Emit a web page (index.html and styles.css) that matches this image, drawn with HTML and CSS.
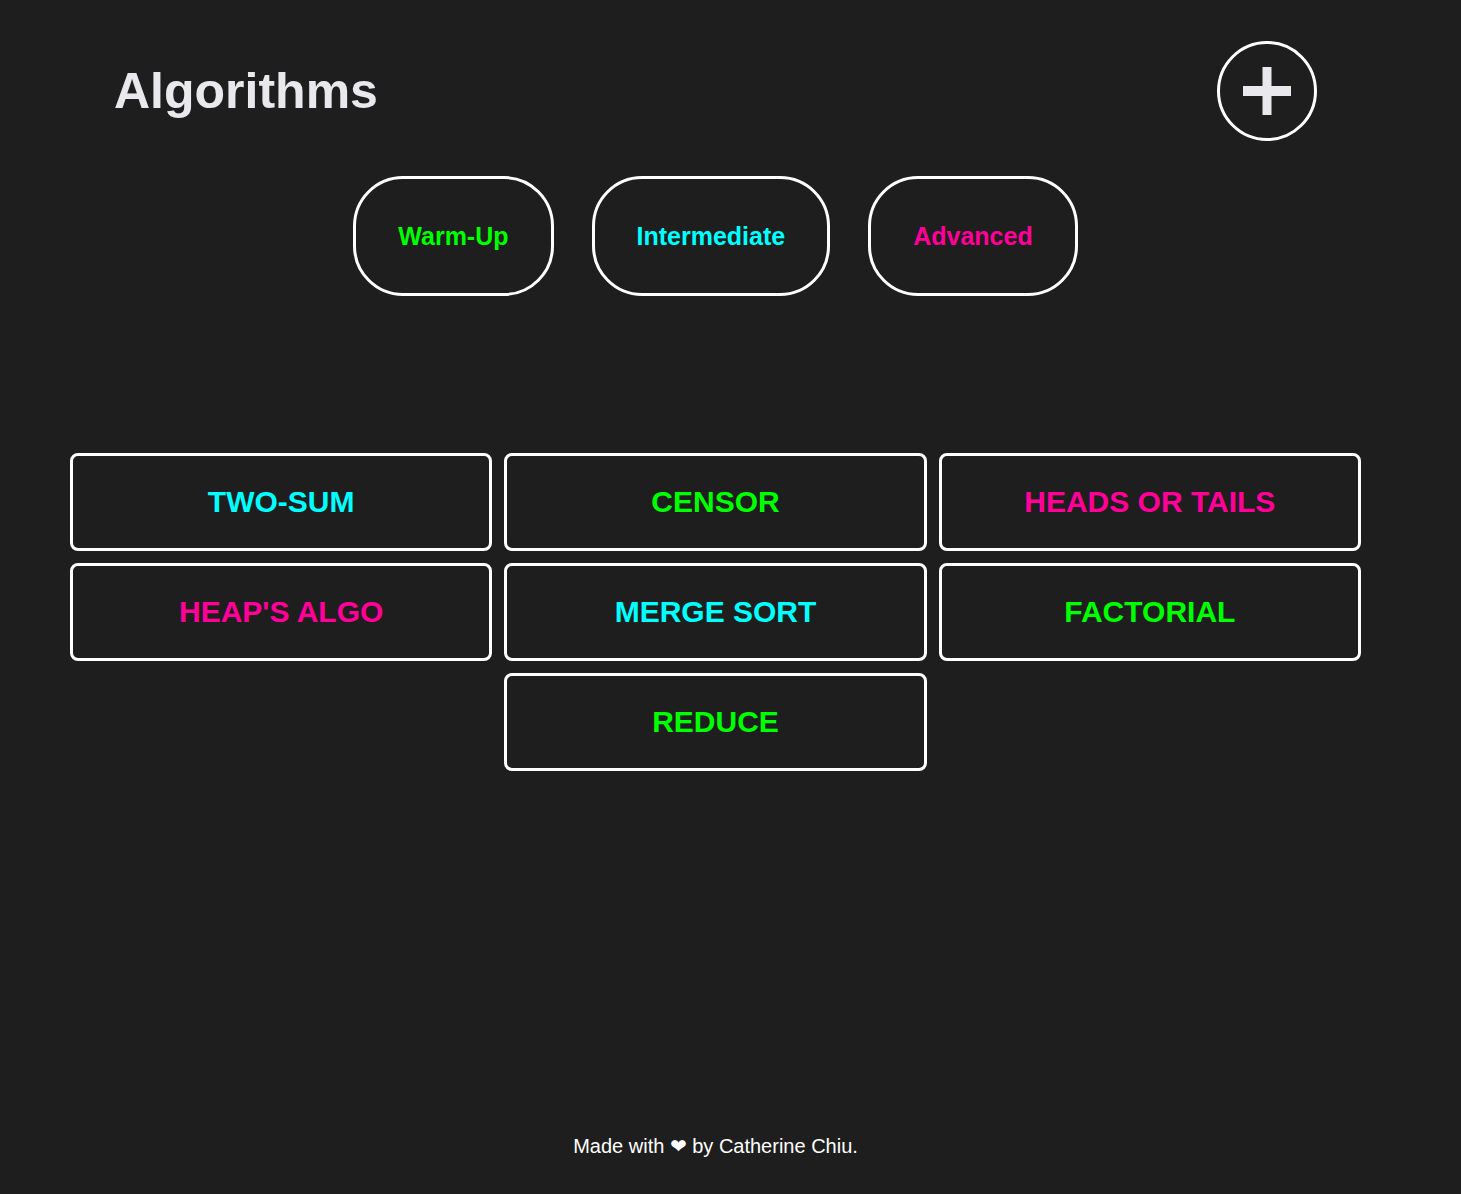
FILE: index.html
```html
<!DOCTYPE html>
<html lang="en">
<head>
<meta charset="utf-8">
<title>Algorithms</title>
<link rel="stylesheet" href="styles.css">
</head>
<body>
<div class="page">
  <header class="header">
    <h1 class="title">Algorithms</h1>
    <button class="add-btn" aria-label="Add">
      <svg width="48" height="48" viewBox="0 0 48 48"><rect x="0" y="19" width="48" height="10" fill="#e9e9ed"/><rect x="19.5" y="0" width="9" height="48" fill="#e9e9ed"/></svg>
    </button>
  </header>
  <nav class="filters">
    <button class="filter green">Warm-Up</button>
    <button class="filter cyan">Intermediate</button>
    <button class="filter pink">Advanced</button>
  </nav>
  <main class="cards">
    <div class="card cyan">TWO-SUM</div>
    <div class="card green">CENSOR</div>
    <div class="card pink">HEADS OR TAILS</div>
    <div class="card pink">HEAP'S ALGO</div>
    <div class="card cyan">MERGE SORT</div>
    <div class="card green">FACTORIAL</div>
    <div class="card green">REDUCE</div>
  </main>
  <footer class="footer">Made with <span class="heart">&#x2764;&#xFE0E;</span> by Catherine Chiu.</footer>
</div>
</body>
</html>
```
FILE: styles.css
```css
html, body {
  margin: 0;
  padding: 0;
  background: #1e1e1e;
}
body {
  font-family: "Liberation Sans", Arial, sans-serif;
}
.page {
  min-height: 100vh;
  box-sizing: border-box;
  padding: 0 100px 0 70px;
  display: flex;
  flex-direction: column;
}
.header {
  display: flex;
  align-items: center;
  justify-content: space-between;
  height: 100px;
  margin-top: 41px;
  padding: 0 44px 0 44px;
}
.title {
  margin: 0;
  font-size: 50px;
  line-height: 50px;
  font-weight: 700;
  color: #e9e9ed;
}
.add-btn {
  width: 100px;
  height: 100px;
  box-sizing: border-box;
  border: 3px solid #ffffff;
  border-radius: 50%;
  background: transparent;
  padding: 0;
  display: flex;
  align-items: center;
  justify-content: center;
}
.add-btn svg { display: block; }
.filters {
  display: flex;
  justify-content: center;
  gap: 38px;
  margin-top: 35px;
}
.filter {
  font-family: "Liberation Sans", Arial, sans-serif;
  font-weight: 700;
  font-size: 25px;
  line-height: 28px;
  padding: 43px 42px;
  border: 3px solid #ffffff;
  border-radius: 50px;
  background: transparent;
}
.green { color: #00ff00; }
.cyan { color: #00ffff; }
.pink { color: #ff0099; }
.cards {
  display: flex;
  flex-wrap: wrap;
  justify-content: center;
  gap: 12px;
  margin-top: 157px;
}
.card {
  width: calc((100% - 24px) / 3);
  height: 98px;
  box-sizing: border-box;
  border: 3px solid #ffffff;
  border-radius: 8px;
  display: flex;
  align-items: center;
  justify-content: center;
  font-size: 30px;
  font-weight: 700;
}
.footer {
  margin-top: auto;
  padding-bottom: 36px;
  text-align: center;
  color: #ffffff;
  font-size: 20px;
  line-height: 23px;
}
.heart {
  font-family: "DejaVu Sans", sans-serif;
  font-size: 20px;
}
```
